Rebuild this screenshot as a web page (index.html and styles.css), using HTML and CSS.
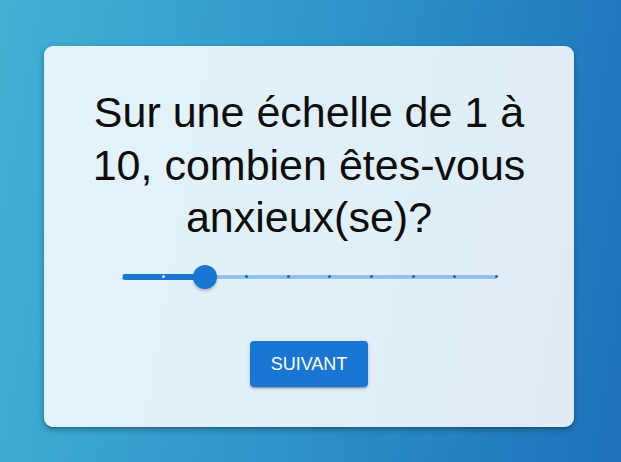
FILE: index.html
```html
<!DOCTYPE html>
<html lang="fr">
<head>
<meta charset="utf-8">
<title>Questionnaire</title>
<link rel="stylesheet" href="styles.css">
</head>
<body>
<main class="card">
  <h1 class="question">Sur une échelle de 1 à 10, combien êtes-vous anxieux(se)?</h1>
  <div class="slider" role="slider" aria-valuemin="1" aria-valuemax="10" aria-valuenow="3">
    <div class="rail"></div>
    <div class="track" style="width: 22.222%"></div>
    <span class="mark on" style="left: 0%"></span>
    <span class="mark on" style="left: 11.111%"></span>
    <span class="mark" style="left: 22.222%"></span>
    <span class="mark" style="left: 33.333%"></span>
    <span class="mark" style="left: 44.444%"></span>
    <span class="mark" style="left: 55.556%"></span>
    <span class="mark" style="left: 66.667%"></span>
    <span class="mark" style="left: 77.778%"></span>
    <span class="mark" style="left: 88.889%"></span>
    <span class="mark" style="left: 100%"></span>
    <span class="thumb" style="left: 22.222%"></span>
  </div>
  <button class="btn" type="button">SUIVANT</button>
</main>
</body>
</html>
```

FILE: styles.css
```css
html, body {
  margin: 0;
  height: 100%;
}
body {
  background: linear-gradient(100deg, #41b0d4 0%, #2f98cb 45%, #1e72bb 100%);
  font-family: "Liberation Sans", Arial, sans-serif;
  display: flex;
  justify-content: center;
  align-items: flex-start;
  padding-top: 46px;
  box-sizing: border-box;
}
.card {
  width: 530px;
  box-sizing: border-box;
  background: rgba(255, 255, 255, 0.86);
  border-radius: 9px;
  box-shadow: 0 3px 6px rgba(0, 0, 0, 0.28), 0 1px 2px rgba(0, 0, 0, 0.15);
  padding: 40px 28px 40px;
  display: flex;
  flex-direction: column;
  align-items: center;
  margin-left: -3px;
}
.question {
  margin: 0;
  font-size: 43px;
  font-weight: normal;
  line-height: 52.5px;
  color: #0d0d0d;
  text-align: center;
}
.slider {
  position: relative;
  width: 375px;
  height: 24px;
  margin-top: 21px;
}
.rail {
  position: absolute;
  left: 0;
  right: 0;
  top: 10px;
  height: 4px;
  border-radius: 2px;
  background: #1976d2;
  opacity: 0.38;
}
.track {
  position: absolute;
  left: 0;
  top: 9px;
  height: 6px;
  border-radius: 3px;
  background: #1976d2;
}
.mark {
  position: absolute;
  top: 10.5px;
  width: 3px;
  height: 3px;
  margin-left: -1.5px;
  border-radius: 50%;
  background: #1565c0;
}
.mark.on {
  background: rgba(255, 255, 255, 0.85);
}
.thumb {
  position: absolute;
  top: 0;
  width: 24px;
  height: 24px;
  margin-left: -12px;
  border-radius: 50%;
  background: #1976d2;
  box-shadow: 0 2px 3px rgba(0, 0, 0, 0.25);
}
.btn {
  margin-top: 52px;
  border: 0;
  border-radius: 4px;
  background: #1976d2;
  color: #fff;
  font-family: "Liberation Sans", Arial, sans-serif;
  font-size: 18px;
  line-height: 26px;
  padding: 10px 21px;
  box-shadow: 0 3px 1px -2px rgba(0,0,0,0.2), 0 2px 2px 0 rgba(0,0,0,0.14), 0 1px 5px 0 rgba(0,0,0,0.12);
  cursor: pointer;
}
```
